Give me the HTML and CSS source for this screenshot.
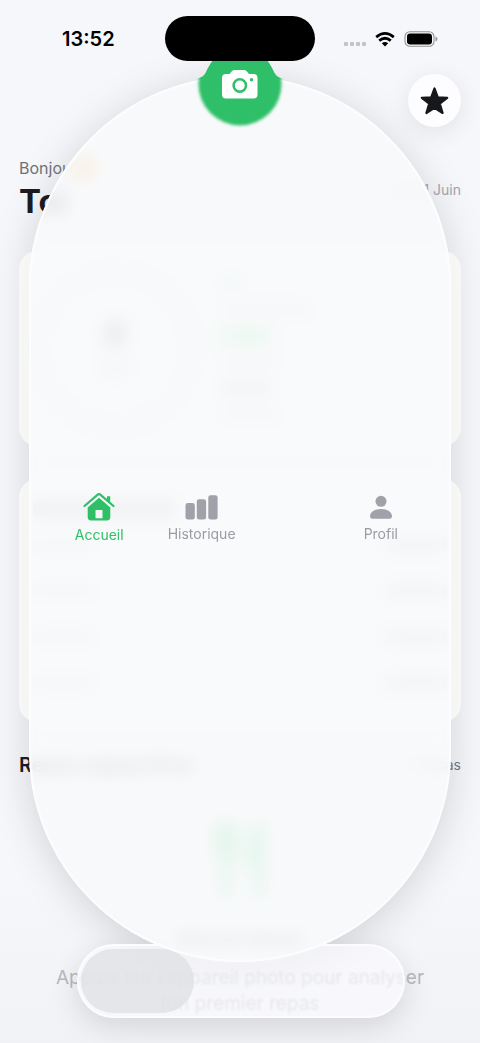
FILE: index.html
```html
<!DOCTYPE html>
<html lang="fr">
<head>
<meta charset="utf-8">
<meta name="viewport" content="width=device-width, initial-scale=1">
<title>Accueil</title>
<link rel="stylesheet" href="styles.css">
</head>
<body>
<div class="screen">
  <div class="shade"></div>
  <header class="status">
    <time class="clock">13:52</time>
    <div class="signals">
      <span class="dots"><i></i><i></i><i></i><i></i></span>
      <svg width="20" height="15" viewBox="0 0 20 15" fill="none" stroke="#000" stroke-width="2.7" aria-hidden="true"><path d="M1.2 5.1Q10-2.2 18.8 5.1"/><path d="M4.2 8.6Q10 3.9 15.8 8.6"/><path d="M10 14.4 6.8 11.2Q10 8.7 13.2 11.2Z" fill="#000" stroke="none"/></svg>
      <svg width="34" height="16" viewBox="0 0 34 16" aria-hidden="true"><rect x="1" y=".7" width="29" height="14.6" rx="4.8" fill="none" stroke="#929395" stroke-width="1.1"/><rect x="3" y="2.6" width="25" height="10.8" rx="3.2"/><path d="M31.5 5.6q2 .7 2 2.4t-2 2.4z" fill="#929395"/></svg>
    </div>
  </header>

  <main class="content">
    <div class="toolbar">
      <button class="star" aria-label="Favoris"><svg width="31" height="30" viewBox="0 0 31 30" aria-hidden="true"><path d="M15.5 2.500 18.800 11.400 28.200 11.800 20.800 17.600 23.600 27 15.500 21.800 7.400 27 10.200 17.600 2.800 11.800 12.200 11.400Z" fill="#17181b" stroke="#17181b" stroke-width="2.200" stroke-linejoin="round"/></svg></button>
    </div>
    <div class="greeting">
      <div>
        <p class="hello">Bonjour <span class="wave"></span></p>
        <h1>Toi</h1>
      </div>
      <span class="date">Lundi 1 Juin</span>
    </div>

    <section class="card summary">
      <div class="ring"><i class="value"></i><i class="unit"></i></div>
      <div class="legend"><i class="teal"></i><i class="wide"></i><i class="green"></i><i></i><i class="dark"></i><i></i></div>
    </section>

    <section class="card rows">
      <i class="heading"></i>
      <div class="row"><i></i><i></i></div>
      <div class="row"><i></i><i></i></div>
      <div class="row"><i></i><i></i></div>
      <div class="row"><i></i><i></i></div>
    </section>

    <div class="section-head"><h2>Repas aujourd’hui</h2><span>0 repas</span></div>
    <section class="empty">
      <svg width="54" height="76" viewBox="0 0 54 76" fill="none" stroke="#56d987" stroke-width="10" stroke-linecap="round" aria-hidden="true"><path d="M6 5v22q0 8 7 8t7-8V5M13 5v66M46 71V5q-9 8-8 36h8"/></svg>
      <h3>Aucun repas</h3>
      <p>Appuie sur l’appareil photo pour analyser<br>ton premier repas</p>
    </section>
  </main>

  <div class="capsule"><div class="thumb"></div></div>

  <nav class="glass">
    <a class="tab active" href="#accueil">
      <svg width="32" height="28" viewBox="0 0 32 28" aria-hidden="true"><path d="M1.500 13 14.700 1.600q1.300-1 2.600 0L30.500 13" fill="none" stroke="#2fbf67" stroke-width="2.200" stroke-linecap="round"/><path d="M24 3.200h3.200v6.200L24 6.700z" fill="#2fbf67"/><path fill-rule="evenodd" d="M16 4.800 27.300 14.500V24q0 3.400-3.300 3.400H8q-3.300 0-3.300-3.400v-9.500zM12.500 17v8.300h7V17z" fill="#2fbf67"/></svg>
      <span>Accueil</span>
    </a>
    <a class="tab" href="#historique">
      <svg width="33" height="25" viewBox="0 0 33 25" fill="#a0a1a9" aria-hidden="true"><rect x=".5" y="8" width="9.300" height="16.600" rx="2.400"/><rect x="11.800" y="4.200" width="9.300" height="20.400" rx="2.400"/><rect x="23.300" y=".2" width="9.300" height="24.400" rx="2.400"/></svg>
      <span>Historique</span>
    </a>
    <a class="tab profile" href="#profil">
      <svg width="24" height="25" viewBox="0 0 24 25" fill="#a0a1a9" aria-hidden="true"><circle cx="12" cy="6.300" r="5.500"/><path d="M1 21.500C1 17 5.500 14 12 14s11 3 11 7.500q0 2.300-2.500 2.300h-17Q1 23.800 1 21.500z"/></svg>
      <span>Profil</span>
    </a>
  </nav>

  <button class="camera" aria-label="Appareil photo">
    <svg width="100" height="86" viewBox="0 0 100 86" aria-hidden="true">
      <defs><filter id="soft" x="-20%" y="-20%" width="140%" height="140%"><feGaussianBlur stdDeviation="1.8"/></filter><clipPath id="lower"><path d="M0 36 8 34.500Q13 33.500 16 29L22 18H78L84 29Q87 33.500 92 34.500L100 36V86H0z"/></clipPath></defs>
      <path d="M25 14H75Q80 19 84 28 86 33 92 34.500H8Q14 33 16 28 20 19 25 14z" fill="#2fbf67"/>
      <g clip-path="url(#lower)"><circle cx="50" cy="40" r="41.500" fill="#2fbf67" filter="url(#soft)"/></g>
      <g transform="translate(0 2)">
        <path d="M36 28h3.500l2.500-3q1-1 2.500-1h9.500q1.500 0 2.500 1l2.500 3h4.500q4 0 4 4v16.500q0 4-4 4h-27.500q-4 0-4-4V32q0-4 4-4z" fill="#fff"/>
        <circle cx="49.800" cy="39.500" r="6.200" fill="none" stroke="#2fbf67" stroke-width="2.500"/><circle cx="61.500" cy="33.700" r="1.700" fill="#2fbf67"/>
      </g>
    </svg>
  </button>
  <div class="island"></div>
</div>
</body>
</html>
```
FILE: styles.css
```css
* { box-sizing: border-box; }
body { margin: 0; font-family: Inter, "Liberation Sans", sans-serif; color: #1a1b20; background: #f6f7fa; }
h1, h2, h3, p { margin: 0; }
i { display: block; }
svg { display: block; flex: none; }
button { border: 0; padding: 0; }
a { text-decoration: none; }

.screen { position: relative; min-height: 100vh; overflow: hidden; background: linear-gradient(#f6f7fa 85%, #f1f2f5); }

.status { position: relative; height: 74px; padding: 4px 42px 0 62px; display: flex; justify-content: space-between; }
.clock { font-size: 20px; line-height: 70px; font-weight: 600; color: #000; }
.signals { height: 70px; display: flex; align-items: center; gap: 9px; }
.dots { display: flex; gap: 2px; padding-top: 10px; }
.dots i { width: 4px; height: 4px; border-radius: 1px; background: #c2c3c5; }
.island { position: absolute; top: 16px; left: 50%; width: 150px; height: 45px; margin-left: -75px; border-radius: 23px; background: #000; }

.content { position: relative; padding: 0 19px; }
.toolbar { display: flex; justify-content: flex-end; }
.star { width: 53px; height: 53px; border-radius: 50%; background: #fdfdff; display: grid; place-items: center; box-shadow: 0 5px 24px rgba(0, 0, 0, .09); }
.greeting { display: flex; justify-content: space-between; align-items: flex-start; padding-top: 29px; height: 124px; }
.hello { display: flex; align-items: center; gap: 4px; font-size: 16px; line-height: 20px; color: #707176; }
.wave { width: 24px; height: 24px; border-radius: 50%; background: #ffb53c; margin-left: -8px; }
h1 { font-size: 33px; line-height: 42px; font-weight: 700; }
.date { font-size: 14px; line-height: 20px; padding-top: 24px; color: #a0a1a6; }

.card { border-radius: 18px; background: rgba(252, 252, 250, .7); }
.summary { height: 195px; display: flex; align-items: center; padding: 0 9px; gap: 20px; }
.ring { width: 174px; height: 174px; border: 20px solid #edf4f0; border-radius: 50%; display: flex; flex-direction: column; align-items: center; justify-content: center; gap: 14px; }
.value { width: 22px; height: 26px; background: #9b9ca8; }
.unit { width: 32px; height: 16px; background: #dcdde3; }
.legend { display: grid; gap: 12px; }
.legend i { width: 56px; height: 14px; background: #e2e4e6; }
.legend .teal { width: 18px; background: #c4e6da; }
.legend .wide { width: 88px; }
.legend .green { width: 48px; background: #7aec9b; }
.legend .dark { width: 48px; background: #c3c4ce; }

.rows { margin-top: 33px; height: 243px; padding: 22px 14px 0; }
.heading { width: 142px; height: 16px; margin-bottom: 5px; background: #afb1b5; }
.row { display: flex; justify-content: space-between; height: 46px; align-items: center; }
.row i { width: 62px; height: 12px; background: #dee0e4; }
.row i + i { background: #c5c7c8; }

.section-head { display: flex; justify-content: space-between; align-items: center; height: 86px; }
h2 { font-size: 20px; line-height: 24px; font-weight: 600; }
.section-head span { font-size: 14px; line-height: 20px; color: #707176; }
.empty { display: flex; flex-direction: column; align-items: center; padding-top: 14px; text-align: center; }
h3 { font-size: 20px; line-height: 24px; font-weight: 600; margin-top: 30px; }
.empty p { margin-top: 13px; font-size: 19px; line-height: 26px; color: #b8b9bc; white-space: nowrap; }

.glass, .shade { position: absolute; top: 76px; right: 29px; bottom: 81px; left: 29px; border-radius: 211px; }
.shade { box-shadow: 0 6px 42px rgba(0, 0, 0, .15); }
.glass { border: 2px solid #fcfdfe; padding: 0 17px; display: grid; grid-template-columns: 4fr 4fr 3fr 4fr; align-items: center; background: rgba(248, 249, 250, .88); backdrop-filter: blur(8px); }
.tab { display: flex; flex-direction: column; align-items: center; gap: 4px; font-size: 14px; line-height: 20px; color: #9b9ca3; }
.profile { grid-column: 4; }
.active { color: #2fbf67; }

.capsule { position: absolute; left: 77px; right: 75px; bottom: 25px; height: 74px; border-radius: 37px; border: 2px solid #fcfcfe; padding: 3px 2px; background: rgba(249, 250, 253, .72); backdrop-filter: blur(1px); box-shadow: 0 8px 30px rgba(0, 0, 0, .13); }
.thumb { width: 113px; height: 64px; border-radius: 32px; background: rgba(224, 225, 228, .8); }

.camera { position: absolute; top: 44px; left: 50%; width: 100px; margin-left: -50px; background: none; }
```
